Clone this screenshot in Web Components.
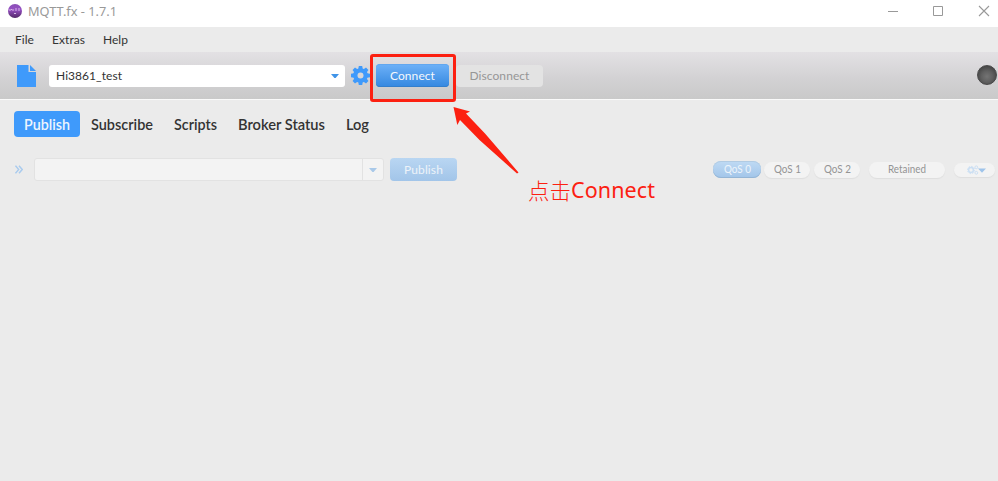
<!DOCTYPE html>
<html lang="en"><head><meta charset="utf-8"><title>MQTT.fx - 1.7.1</title>
<style>
html,body{margin:0;width:998px;height:481px;overflow:hidden;background:#ebebeb;font-family:Lato,"Noto Sans CJK SC",sans-serif}
</style></head><body>
<mqtt-window></mqtt-window>
<script>
const define=(name,html,after)=>customElements.define(name,class extends HTMLElement{
  constructor(){super();this.attachShadow({mode:'open'}).innerHTML=html;}
  connectedCallback(){if(after)after(this);}
});
/* One line of text, condensed or expanded to the width in its "w" attribute. */
define('fit-text','<style>:host{display:inline-block;white-space:nowrap;text-align:left}span{display:inline-block;transform-origin:0 50%}</style><span><slot></slot></span>',el=>{
  const s=el.shadowRoot.querySelector('span'),w=+el.getAttribute('w');
  el.style.width=w+'px';
  const n=el.textContent.length,m=s.getBoundingClientRect().width;
  if(m>w)s.style.transform=`scaleX(${(w/m).toFixed(4)})`;
  else s.style.letterSpacing=((w-m)/n).toFixed(3)+'px';
});
define('push-button',`<style>
:host{display:flex;box-sizing:border-box;align-items:center;justify-content:center;border-radius:4px;font-size:12px;color:#969696;background:#e3e3e3;height:22px}
:host([kind=primary]){height:23px;color:#f4f8fc;background:linear-gradient(#6db1f8,#3588e0);box-shadow:inset 0 -1px #347fcc,inset 0 1px #62a7ef}
:host([kind=faded]){height:23px;color:#edf3f9;background:linear-gradient(#b9d6f2,#a2c5e9)}
</style><slot></slot>`);
define('nav-tab',`<style>
:host{display:flex;box-sizing:border-box;align-items:center;height:26px;padding:0 10px 1px;border-radius:4px;font-size:15px;font-weight:600;color:#333}
:host([active]){background:#3f9afb;color:#edf5fe}
</style><slot></slot>`);
define('pill-button',`<style>
:host{display:flex;box-sizing:border-box;align-items:center;justify-content:center;height:16px;border-radius:8px;font-size:11.5px;line-height:14px;color:#949494;background:#f3f3f3;box-shadow:0 1px 1px #dedede}
:host([active]){height:17px;color:#edf4fb;background:linear-gradient(#bfdaf4,#a2c5e9);box-shadow:inset 0 -1px #94b5d5,inset 0 1px #b1cbe3}
::slotted(fit-text){margin-top:-2px}
</style><slot></slot>`);
define('drop-down',`<style>
:host{display:flex;box-sizing:border-box;height:22px;border-radius:3px;background:#fff;align-items:center;font-size:12px;color:#333}
:host([faded]){background:#f3f3f3;border:1px solid #e2e2e2}
.v{flex:1;padding-left:7px}.a{width:21px;height:100%;display:flex;align-items:center;justify-content:center;box-sizing:border-box;color:#4094e8}
:host([faded]) .a{border-left:1px solid #e2e2e2;color:#a9c9e9}
svg{display:block}
</style><div class="v"><slot></slot></div><div class="a"><svg width="8" height="4"><path d="M0 0H8L4.6 4H3.4Z" fill="currentColor"/></svg></div>`);
define('title-bar',`<style>
:host{display:flex;height:27px;background:#fff;align-items:center;padding:0 8px 0 7px;box-sizing:border-box}
fit-text{font:13px/18px "Noto Sans",sans-serif;color:#999;margin:-5px auto 0 5px}
svg{display:block;margin-top:-5px}.c{display:flex;gap:33px}.c svg:last-child{margin-left:1px}
</style><svg width="16" height="16"><defs><linearGradient id="g" x2="0" y2="1"><stop stop-color="#8a4fb5"/><stop offset=".4" stop-color="#9650c4"/><stop offset="1" stop-color="#502765"/></linearGradient></defs><circle cx="8" cy="8" r="7" fill="url(#g)"/><path d="M3 6v2M4 6.5h1M6 6v2M8 6h2M9 7v1M11 6h2M12 7v1M7 10.5h2" stroke="#d6b8e5" fill="none"/></svg>
<fit-text w="89">MQTT.fx - 1.7.1</fit-text>
<div class="c"><svg width="12" height="12"><path d="M1 6.5H11" stroke="#999"/></svg><svg width="12" height="12"><path d="M1.5 1.5h9v9h-9z" fill="none" stroke="#999"/></svg><svg width="12" height="12"><path d="M1 1L11 11M11 1L1 11" stroke="#999" stroke-width="1.1"/></svg></div>`);
define('menu-bar',`<style>:host{display:flex;height:25px;align-items:center;gap:18px;padding-left:15px;background:#ebebeb;font-size:12px;color:#333;box-sizing:border-box}</style>
<fit-text w="19">File</fit-text><fit-text w="33">Extras</fit-text><fit-text w="25">Help</fit-text>`);
define('connection-bar',`<style>
:host{display:flex;box-sizing:border-box;height:48px;background:linear-gradient(#e3e1e4,#d3d2d4 55%,#c9c9c9);border-bottom:1px solid #fafafa;align-items:center;padding:0 1px 0 17px}
svg{display:block}.gear{margin:0 6px 0 6px}drop-down{width:296px;margin-left:13px}.c{width:73px}.d{width:87px;margin-left:7px}
.led{width:20px;height:20px;border-radius:50%;box-sizing:border-box;background:radial-gradient(circle at 50% 58%,#747474,#606060 40%,#464646 75%);border:1px solid #484848;margin-left:auto;margin-top:-1px}
</style>
<svg width="19" height="22"><path d="M0 0H11.5V7H19V22H0Z" fill="#3f9afb"/><path d="M13 0L19 6H13Z" fill="#3f9afb"/></svg>
<drop-down><fit-text w="66">Hi3861_test</fit-text></drop-down>
<svg class="gear" width="19" height="19" viewBox="0 0 19 19"><g fill="#3f9afb"><path id="t" d="M7.3 3L7.8 0H11.2L11.7 3V16L11.2 19H7.8L7.3 16Z"/><use href="#t" transform="rotate(45 9.5 9.5)"/><use href="#t" transform="rotate(90 9.5 9.5)"/><use href="#t" transform="rotate(135 9.5 9.5)"/><circle cx="9.5" cy="9.5" r="7.3"/></g><circle cx="9.5" cy="9.5" r="3" fill="#d7d6d8"/></svg>
<push-button class="c" kind="primary"><fit-text w="45">Connect</fit-text></push-button>
<push-button class="d"><fit-text w="60">Disconnect</fit-text></push-button>
<div class="led"></div>`);
define('tab-strip',`<style>:host{display:flex;padding:11px 0 0 14px;gap:1px}</style>
<nav-tab active><fit-text w="46">Publish</fit-text></nav-tab><nav-tab><fit-text w="62">Subscribe</fit-text></nav-tab><nav-tab><fit-text w="43">Scripts</fit-text></nav-tab><nav-tab><fit-text w="87">Broker Status</fit-text></nav-tab><nav-tab><fit-text w="23">Log</fit-text></nav-tab>`);
define('publish-row',`<style>
:host{display:flex;align-items:center;padding:21px 3px 0 15px;height:23px}
svg{display:block}drop-down{width:350px;height:23px;margin-left:11px}push-button{width:67px;margin-left:6px}
.p{display:flex;align-items:center;margin-left:auto}
</style>
<svg width="8" height="9"><path d="M.5 .7L3.7 4.5L.5 8.3M4 .7L7.2 4.5L4 8.3" fill="none" stroke="#a9cbee" stroke-width="1.4"/></svg>
<drop-down faded></drop-down><push-button kind="faded"><fit-text w="39">Publish</fit-text></push-button>
<div class="p"><pill-button active style="width:48px"><fit-text w="27">QoS 0</fit-text></pill-button>
<pill-button style="width:46px;margin-left:3px"><fit-text w="27">QoS 1</fit-text></pill-button>
<pill-button style="width:46px;margin-left:4px"><fit-text w="27">QoS 2</fit-text></pill-button>
<pill-button style="width:76px;margin-left:9px"><fit-text w="38">Retained</fit-text></pill-button>
<pill-button style="width:41px;margin-left:9px;height:14px;margin-top:1px"><svg width="19" height="10" style="margin-left:4px;margin-top:-1px"><g fill="none" stroke="#cbdff3"><circle cx="4" cy="5" r="2.4" stroke-width="1.5"/><circle cx="4" cy="5" r="3.6" stroke-dasharray="1.4 1.4"/><circle cx="9.3" cy="2.3" r="1.4"/><circle cx="9.3" cy="7.8" r="1.4"/></g><path d="M11 3.5H19L15 7.8Z" fill="#9fc4ea"/></svg></pill-button></div>`);
define('click-hint',`<style>
:host{position:absolute;left:370px;top:54px;width:290px;height:155px;color:#fc2011;pointer-events:none}
.b{position:absolute;left:0;top:0;width:86px;height:48px;box-sizing:border-box;border:3px solid;border-radius:3px}
svg{position:absolute;left:0;top:0}.t{position:absolute;left:158px;top:122px;display:flex;font:21.5px/28px "Noto Sans","Noto Sans CJK SC",sans-serif}
.z{font-family:"Noto Sans CJK SC",sans-serif;font-weight:300}
</style><div class="b"></div><svg width="160" height="130"><path d="M83.5 53L100 57.5L96 59.5L115 79.5L148.5 118.5L147 119.5L109.5 86L90 66L87.3 71Z" fill="currentColor"/></svg><div class="t"><fit-text class="z" w="43">点击</fit-text><fit-text w="84">Connect</fit-text></div>`);
define('mqtt-window',`<style>:host{display:block;position:relative;width:998px;height:481px;background:#ebebeb;overflow:hidden}</style>
<title-bar></title-bar><menu-bar></menu-bar><connection-bar></connection-bar><tab-strip></tab-strip><publish-row></publish-row><click-hint></click-hint>`);
</script></body></html>
